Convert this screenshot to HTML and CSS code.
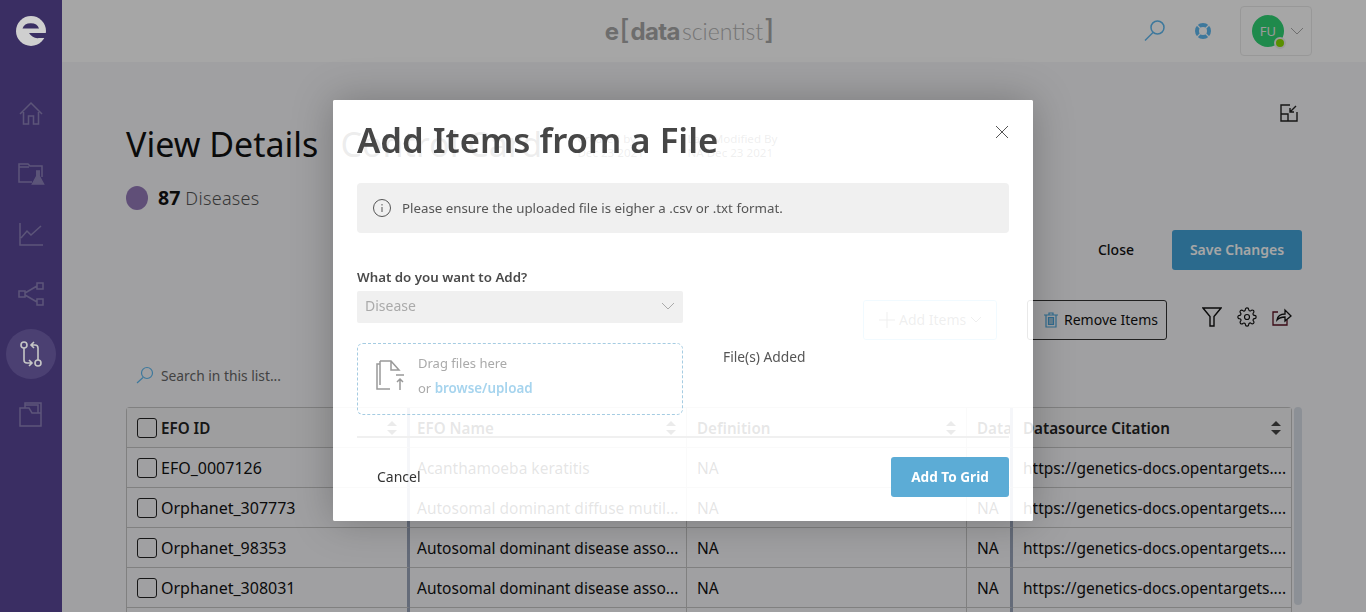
FILE: index.html
```html
<!DOCTYPE html>
<html lang="en">
<head>
    <meta charset="UTF-8">
    <title>View Details</title>
    <meta name="viewport" content="width=device-width, initial-scale=1.0">
    <link rel="stylesheet" href="styles.css">
</head>
<body>

<div class="app">
    <nav class="sidebar">
        <svg class="logo" width="32" height="32" viewBox="0 0 32 32"><circle cx="16" cy="16" r="15" fill="#cfcfcf"/><path d="M7.500 13.500a8.500 7 0 0 1 16.500 0z" fill="#3a2f63"/><path d="M14 18h18v5h-8q-6 1-10-5z" fill="#3a2f63"/></svg>
        <a class="nav-item"><svg width="26" height="26" viewBox="0 0 26 26" fill="none" stroke="currentColor" stroke-width="1.500"><path d="M2 13 13 2l11 11M5.500 11v12h5v-8h5v8h5V11"/></svg></a>
        <a class="nav-item"><svg width="28" height="26" viewBox="0 0 28 26" fill="none" stroke="currentColor" stroke-width="1.500"><path d="M15 21H2V3h9l2 2h12v11"/><path d="M2 6h10"/><path d="M19 10h4m-3.200 0v5l-4.300 8h11l-4.300-8v-5" fill="currentColor"/></svg></a>
        <a class="nav-item"><svg width="26" height="26" viewBox="0 0 26 26" fill="none" stroke="currentColor" stroke-width="1.500"><path d="M2 2v22h23M3 17l6-7 4 4 10-9"/></svg></a>
        <a class="nav-item"><svg width="26" height="26" viewBox="0 0 26 26" fill="none" stroke="currentColor" stroke-width="1.500"><path d="M1 10h6v6H1zM19 2h6v6h-6zM19 18h6v6h-6zM7 12l12-7M7 14l12 7"/></svg></a>
        <a class="nav-item active"><svg width="24" height="28" viewBox="0 0 24 28" fill="none" stroke="currentColor" stroke-width="1.600"><circle cx="5" cy="5" r="3"/><circle cx="19" cy="23" r="3"/><path d="M5 8v12q0 3 3 3h5m-3-3 3 3-3 3M19 20V8q0-3-3-3h-4m3-3-3 3 3 3"/></svg></a>
        <a class="nav-item"><svg width="26" height="26" viewBox="0 0 26 26" fill="none" stroke="currentColor" stroke-width="1.500"><path d="M7 7V2h16v22M2 25V7h9l3 5h9v13zM23 24v1"/><path d="M7 4h13v8"/></svg></a>
    </nav>

    <div class="content">
        <header class="topbar">
            <div class="brand"><b>e</b><span class="bracket">[</span><b>data</b><span class="light">scientist</span><span class="bracket">]</span></div>
            <div class="top-actions">
                <svg width="24" height="24" viewBox="0 0 24 24" fill="none" stroke="#5fb9f0" stroke-width="1.500"><circle cx="14.500" cy="8.500" r="6.500"/><path d="M10 13.500 2 21.500"/></svg>
                <svg width="18" height="18" viewBox="0 0 18 18" fill="none" stroke="#5fb9f0"><circle cx="9" cy="9" r="6" stroke-width="4"/><path d="M3 3l3.500 3.500m5 5L15 15M15 3l-3.500 3.500m-5 5L3 15" stroke="#fff" stroke-width="1.200"/></svg>
                <div class="user-menu">
                    <span class="avatar">FU<i class="status"></i></span>
                    <svg width="14" height="8" viewBox="0 0 14 8" fill="none" stroke="#aaa"><path d="M1 1l6 6 6-6"/></svg>
                </div>
            </div>
        </header>

        <main class="page">
            <div class="resize-row">
                <svg width="18" height="18" viewBox="0 0 18 18" fill="none" stroke="#222" stroke-width="1.400"><path d="M10 1H1v16h16V8M1 10h7v7M16 2l-6 6m0-4v4h4"/></svg>
            </div>
            <div class="title-row">
                <h1>View Details</h1>
                <div class="ghost-name">Control Card</div>
                <div class="ghost-meta">Created by<br>Dec 23 2021</div>
                <div class="ghost-meta">Last Modified By<br>NA Dec 23 2021</div>
            </div>
            <div class="count"><i class="dot"></i><b>87</b> Diseases</div>
            <div class="save-row">
                <a class="btn-link">Close</a>
                <a class="btn-save">Save Changes</a>
            </div>
            <div class="tools-row">
                <a class="btn-outline add"><svg width="16" height="16" viewBox="0 0 16 16" stroke="#666" fill="none"><path d="M8 0v16M0 8h16"/></svg>Add Items<svg width="12" height="7" viewBox="0 0 12 7" stroke="#666" fill="none"><path d="M1 1l5 5 5-5"/></svg></a>
                <a class="btn-outline remove"><svg width="14" height="16" viewBox="0 0 14 16" fill="none" stroke="#4aa5dc" stroke-width="1.200"><path d="M0 3h14M5 3V1h4v2M2 3v12h10V3"/><path d="M4.500 5.500h5v7h-5z" fill="#9fc6dd"/></svg>Remove Items</a>
                <svg class="tool" width="20" height="20" viewBox="0 0 20 20" fill="none" stroke="#111" stroke-width="1.400"><path d="M1 1h18l-7 8.500V19H8V9.500z"/></svg>
                <svg class="tool" width="20" height="20" viewBox="0 0 24 24" fill="none" stroke="#111" stroke-width="1.400"><circle cx="12" cy="12" r="3"/><path d="M19.400 15a1.650 1.650 0 0 0 .33 1.820l.06.06a2 2 0 0 1 0 2.830 2 2 0 0 1-2.830 0l-.06-.06a1.650 1.650 0 0 0-1.820-.33 1.650 1.650 0 0 0-1 1.510V21a2 2 0 0 1-2 2 2 2 0 0 1-2-2v-.09A1.650 1.650 0 0 0 9 19.400a1.650 1.650 0 0 0-1.820.33l-.06.06a2 2 0 0 1-2.830 0 2 2 0 0 1 0-2.830l.06-.06a1.650 1.650 0 0 0 .33-1.820 1.650 1.650 0 0 0-1.510-1H3a2 2 0 0 1-2-2 2 2 0 0 1 2-2h.09A1.650 1.650 0 0 0 4.600 9a1.650 1.650 0 0 0-.33-1.820l-.06-.06a2 2 0 0 1 0-2.830 2 2 0 0 1 2.830 0l.06.06a1.650 1.650 0 0 0 1.820.33H9a1.650 1.650 0 0 0 1-1.510V3a2 2 0 0 1 2-2 2 2 0 0 1 2 2v.09a1.650 1.650 0 0 0 1 1.510 1.650 1.650 0 0 0 1.820-.33l.06-.06a2 2 0 0 1 2.830 0 2 2 0 0 1 0 2.830l-.06.06a1.650 1.650 0 0 0-.33 1.820V9a1.650 1.650 0 0 0 1.510 1H21a2 2 0 0 1 2 2 2 2 0 0 1-2 2h-.09a1.650 1.650 0 0 0-1.510 1z"/></svg>
                <svg class="tool" width="20" height="20" viewBox="0 0 20 20" fill="none" stroke="#111" stroke-width="1.300"><path d="M6 5H1v13h14v-5" stroke="#5a1020"/><path d="M5 13q1-6 8-6V3l6 6-6 5v-4q-5 0-8 3z"/></svg>
            </div>
            <label class="search"><svg width="18" height="18" viewBox="0 0 18 18" fill="none" stroke="#5fb9f0" stroke-width="1.200"><circle cx="11" cy="7" r="5.500"/><path d="M7 11.500 1 17"/></svg>Search in this list...</label>

            <div class="grid-wrap">
                <table class="grid">
                    <colgroup><col class="c-id"><col class="c-name"><col class="c-def"><col class="c-data"><col class="c-cite"></colgroup>
                    <thead>
                        <tr>
                            <th class="pin"><div class="cell"><i class="check"></i>EFO ID<i class="sort"></i></div></th>
                            <th><div class="cell name">EFO Name<i class="sort"></i></div></th>
                            <th><div class="cell">Definition<i class="sort"></i></div></th>
                            <th class="pin"><div class="cell">Data</div></th>
                            <th><div class="cell">Datasource Citation<i class="sort"></i></div></th>
                        </tr>
                    </thead>
                    <tbody>
                        <tr><td class="pin"><div class="cell"><i class="check"></i>EFO_0007126</div></td><td><div class="cell name">Acanthamoeba keratitis</div></td><td><div class="cell">NA</div></td><td class="pin"><div class="cell">NA</div></td><td><div class="cell">https://genetics-docs.opentargets....</div></td></tr>
                        <tr><td class="pin"><div class="cell"><i class="check"></i>Orphanet_307773</div></td><td><div class="cell name">Autosomal dominant diffuse mutil...</div></td><td><div class="cell">NA</div></td><td class="pin"><div class="cell">NA</div></td><td><div class="cell">https://genetics-docs.opentargets....</div></td></tr>
                        <tr><td class="pin"><div class="cell"><i class="check"></i>Orphanet_98353</div></td><td><div class="cell name">Autosomal dominant disease asso...</div></td><td><div class="cell">NA</div></td><td class="pin"><div class="cell">NA</div></td><td><div class="cell">https://genetics-docs.opentargets....</div></td></tr>
                        <tr><td class="pin"><div class="cell"><i class="check"></i>Orphanet_308031</div></td><td><div class="cell name">Autosomal dominant disease asso...</div></td><td><div class="cell">NA</div></td><td class="pin"><div class="cell">NA</div></td><td><div class="cell">https://genetics-docs.opentargets....</div></td></tr>
                        <tr><td class="pin"></td><td></td><td></td><td class="pin"></td><td></td></tr>
                    </tbody>
                </table>
                <div class="scrollbar"></div>
            </div>
        </main>
    </div>
</div>

<div class="backdrop"></div>

<section class="modal">
    <div class="modal-head">
        <h2>Add Items from a File</h2>
        <svg width="14" height="14" viewBox="0 0 14 14" stroke="#555" fill="none"><path d="M1 1l12 12M13 1 1 13"/></svg>
    </div>
    <div class="notice">
        <svg width="20" height="20" viewBox="0 0 20 20" fill="none" stroke="#555"><circle cx="10" cy="10" r="8.500"/><path d="M10 9v5M10 6v1.500"/></svg>
        Please ensure the uploaded file is eigher a .csv or .txt format.
    </div>
    <div class="form-grid">
        <div>
            <div class="field-label">What do you want to Add?</div>
            <div class="select">Disease<svg width="14" height="8" viewBox="0 0 14 8" fill="none" stroke="#aaa"><path d="M1 1l6 6 6-6"/></svg></div>
            <div class="dropzone">
                <svg width="30" height="32" viewBox="0 0 30 32" fill="none" stroke="#999" stroke-width="1.500"><path d="M15 29H2V4h3M5 1v24M5 1h11l8 9h-8V1M21 15h8M25 30V19m-3 3 3-3 3 3"/></svg>
                <div class="drop-text">
                    <div>Drag files here</div>
                    <div>or <b>browse/upload</b></div>
                </div>
            </div>
        </div>
        <div class="files-added">File(s) Added</div>
    </div>
    <div class="modal-foot">
        <a class="cancel">Cancel</a>
        <a class="btn-add">Add To Grid</a>
    </div>
</section>

</body>
</html>
```

FILE: styles.css
```css
* {
    box-sizing: border-box;
}

html, body {
    margin: 0;
    height: 100%;
    overflow: hidden;
}

body {
    font-family: "Noto Sans", "Open Sans", sans-serif;
    color: #111;
    background-color: #fff;
}

.app {
    display: flex;
    height: 612px;
    overflow: hidden;
}

/* sidebar */
.sidebar {
    width: 62px;
    flex: none;
    background-color: #5a4899;
    display: flex;
    flex-direction: column;
    align-items: center;
    padding-top: 15px;
}

/* logo and current icon stay bright above the backdrop */
.logo {
    margin-bottom: 42px;
    position: relative;
    z-index: 1;
}

.nav-item {
    width: 50px;
    height: 50px;
    margin-bottom: 10px;
    display: flex;
    align-items: center;
    justify-content: center;
    color: #8e83ba;
    border-radius: 50%;
}

.nav-item.active {
    background-color: #7463b0;
    color: #c6c6c6;
}

.nav-item.active svg {
    position: relative;
    z-index: 1;
}

/* top bar */
.content {
    flex: 1;
    min-width: 0;
}

.topbar {
    height: 62px;
    background-color: #fff;
    position: relative;
    display: flex;
    align-items: center;
    justify-content: center;
}

.brand {
    font-family: Inter, "Liberation Sans", sans-serif;
    font-size: 24px;
    color: #a8a8a8;
    margin-left: -48px;
    display: flex;
    align-items: center;
}

.brand b {
    font-weight: 700;
    letter-spacing: -0.6px;
}

.brand .light {
    font-family: Lato, sans-serif;
    font-weight: 300;
    font-size: 23px;
    margin-left: 2px;
    color: #b4b4b4;
}

.brand .bracket {
    font-size: 27px;
    font-weight: 500;
    margin: -3px 1px 0;
}

.top-actions {
    position: absolute;
    right: 54px;
    top: 6px;
    display: flex;
    align-items: center;
    gap: 27px;
}

.user-menu {
    width: 72px;
    height: 50px;
    border: 1px solid #eaeaea;
    border-radius: 4px;
    display: flex;
    align-items: center;
    gap: 6px;
    padding-left: 11px;
    margin-left: 1px;
}

.avatar {
    width: 32px;
    height: 32px;
    border-radius: 50%;
    background-color: #30d475;
    color: #eee;
    font-size: 13px;
    display: flex;
    align-items: center;
    justify-content: center;
    position: relative;
}

.status {
    position: absolute;
    right: -2px;
    bottom: -2px;
    width: 12px;
    height: 12px;
    border-radius: 50%;
    background-color: #8bdc00;
    border: 2px solid #eee;
}

/* page */
.page {
    height: 550px;
    padding: 0 64px;
    background-color: #f6f6f9;
}

.resize-row {
    display: flex;
    justify-content: flex-end;
    padding-top: 42px;
    height: 60px;
    margin-right: 4px;
}

.title-row {
    display: flex;
    align-items: flex-start;
    height: 44px;
}

h1 {
    margin: 0 22px 0 0;
    font-size: 34px;
    font-weight: 400;
    line-height: 44px;
    white-space: nowrap;
}

.ghost-name {
    font-size: 34px;
    line-height: 44px;
    width: 237px;
    color: #555;
    white-space: nowrap;
}

.ghost-meta {
    font-size: 11.600px;
    line-height: 14px;
    color: #666;
    margin-top: 10px;
    width: 110px;
    white-space: nowrap;
}

.count {
    display: flex;
    align-items: center;
    height: 24px;
    margin-top: 20px;
    font-size: 18px;
    line-height: 24px;
    font-weight: 300;
    letter-spacing: 0.3px;
    color: #555;
}

.count b {
    color: #111;
    font-size: 19.500px;
    font-weight: 700;
    letter-spacing: 0;
    margin-right: 5px;
}

.dot {
    width: 22px;
    height: 24px;
    border-radius: 50%;
    background-color: #947ab9;
    margin-right: 10px;
}

.save-row {
    display: flex;
    justify-content: flex-end;
    align-items: center;
    gap: 38px;
    margin-top: 20px;
}

.btn-link {
    font-size: 14px;
    font-weight: 500;
    padding-bottom: 2px;
}

.btn-save {
    width: 130px;
    height: 40px;
    padding-bottom: 2px;
    border-radius: 3px;
    background-color: #42a3d9;
    color: #fff;
    font-size: 14px;
    font-weight: 600;
    display: flex;
    align-items: center;
    justify-content: center;
}

.tools-row {
    display: flex;
    align-items: center;
    margin-top: 30px;
    padding-left: 737px;
}

.btn-outline {
    flex: none;
    height: 40px;
    border: 1px solid #333;
    border-radius: 3px;
    display: flex;
    align-items: center;
    font-size: 14px;
    padding-bottom: 1px;
}

.btn-outline.add {
    width: 134px;
    color: #666;
    border-color: #7cc6ee;
    gap: 4px;
    padding-left: 15px;
    margin-right: 30px;
}

.btn-outline.remove {
    width: 140px;
    gap: 6px;
    padding-left: 16px;
    margin-right: 35px;
}

.tool {
    flex: none;
    margin: -6px 15px 0 0;
}

.search {
    display: flex;
    align-items: center;
    gap: 7px;
    font-size: 13.800px;
    color: #666;
    margin: 25px 0 0 10px;
    height: 20px;
}

/* table */
.grid-wrap {
    display: flex;
    gap: 2px;
    margin-top: 22px;
    width: 1176px;
}

.grid {
    width: 1166px;
    table-layout: fixed;
    border-collapse: separate;
    border-spacing: 0;
    border: 1px solid #c5c5c5;
    border-bottom: 0;
    border-radius: 4px 4px 0 0;
    font-size: 15.500px;
    flex: none;
    align-self: flex-start;
}

.c-id { width: 283px; }
.c-name { width: 277px; }
.c-def { width: 280px; }
.c-data { width: 46px; }

th, td {
    height: 40px;
    padding: 0;
    border-bottom: 1px solid #c5c5c5;
    border-right: 1px solid #c5c5c5;
    font-weight: 400;
    text-align: left;
    white-space: nowrap;
    overflow: hidden;
}

th {
    font-size: 15.200px;
    font-weight: 600;
    background-color: #f3f3f5;
    color: #222;
}

td:first-child {
    font-size: 16px;
}

th:last-child, td:last-child {
    border-right: 0;
}

.pin {
    border-right: 3px solid #9aa5bb;
}

.cell {
    display: flex;
    align-items: center;
    height: 39px;
    padding-left: 10px;
    position: relative;
}

.cell.name {
    padding-left: 7px;
}

.check {
    width: 20px;
    height: 20px;
    border: 1px solid #222;
    border-radius: 3px;
    margin-right: 4px;
    flex: none;
}

.sort {
    position: absolute;
    right: 10px;
    top: 13px;
    width: 10px;
    height: 14px;
}

.sort::before, .sort::after {
    content: "";
    position: absolute;
    left: 0;
    border-left: 5px solid transparent;
    border-right: 5px solid transparent;
}

.sort::before {
    top: 0;
    border-bottom: 5px solid #444;
}

.sort::after {
    bottom: 0;
    border-top: 5px solid #444;
}

.scrollbar {
    width: 10px;
    height: 198px;
    border-radius: 5px;
    background-color: #d8dde6;
}

/* overlay */
.backdrop {
    position: fixed;
    inset: 0;
    background-color: rgba(0, 0, 0, 0.35);
}

.modal {
    position: absolute;
    left: 333px;
    top: 100px;
    width: 700px;
    height: 421px;
    padding: 0 24px;
    background-color: rgba(255, 255, 255, 0.89);
    backdrop-filter: brightness(1.62);
    border-radius: 2px;
    box-shadow: 0 0 40px rgba(0, 0, 0, 0.25);
    color: #444;
    z-index: 2;
}

.modal-head {
    display: flex;
    justify-content: space-between;
    height: 83px;
    padding-top: 19px;
}

.modal-head svg {
    margin-top: 6px;
}

h2 {
    margin: 0;
    font-size: 34.700px;
    font-weight: 600;
    line-height: 42px;
    color: #464646;
    white-space: nowrap;
}

.notice {
    height: 50px;
    border-radius: 4px;
    background-color: #f0f0f0;
    display: flex;
    align-items: center;
    gap: 10px;
    padding-left: 15px;
    font-size: 13.300px;
    color: #555;
}

.form-grid {
    display: flex;
    height: 170px;
    margin-top: 35px;
    gap: 40px;
    border-bottom: 2px solid #f0f0f0;
}

.form-grid > div:first-child {
    width: 326px;
}

.field-label {
    font-size: 13.300px;
    font-weight: 600;
    line-height: 18px;
    color: #4a4a4a;
}

.select {
    height: 32px;
    margin-top: 5px;
    background-color: #f0f0f0;
    border-radius: 2px;
    padding: 0 8px 3px;
    display: flex;
    align-items: center;
    justify-content: space-between;
    font-size: 14px;
    color: #aaa;
}

.dropzone {
    height: 72px;
    margin-top: 20px;
    padding: 0 0 6px 17px;
    border: 1px dashed #a5cce2;
    border-radius: 6px;
    display: flex;
    align-items: center;
    gap: 13px;
    font-size: 13px;
    color: #aaa;
}

.drop-text {
    line-height: 25px;
}

.drop-text b {
    color: #a6d4ee;
    font-size: 13.400px;
    font-weight: 600;
}

.files-added {
    font-size: 13.800px;
    color: #555;
    padding-top: 79px;
}

.modal-foot {
    display: flex;
    align-items: center;
    justify-content: space-between;
    height: 40px;
    margin-top: 19px;
}

.cancel {
    font-size: 14px;
    margin-left: 20px;
    padding-bottom: 2px;
    color: #333;
}

.btn-add {
    width: 118px;
    height: 40px;
    padding-bottom: 2px;
    border-radius: 3px;
    background-color: #5cacd6;
    mix-blend-mode: multiply;
    color: #fff;
    font-size: 13.600px;
    font-weight: 700;
    display: flex;
    align-items: center;
    justify-content: center;
}
```
